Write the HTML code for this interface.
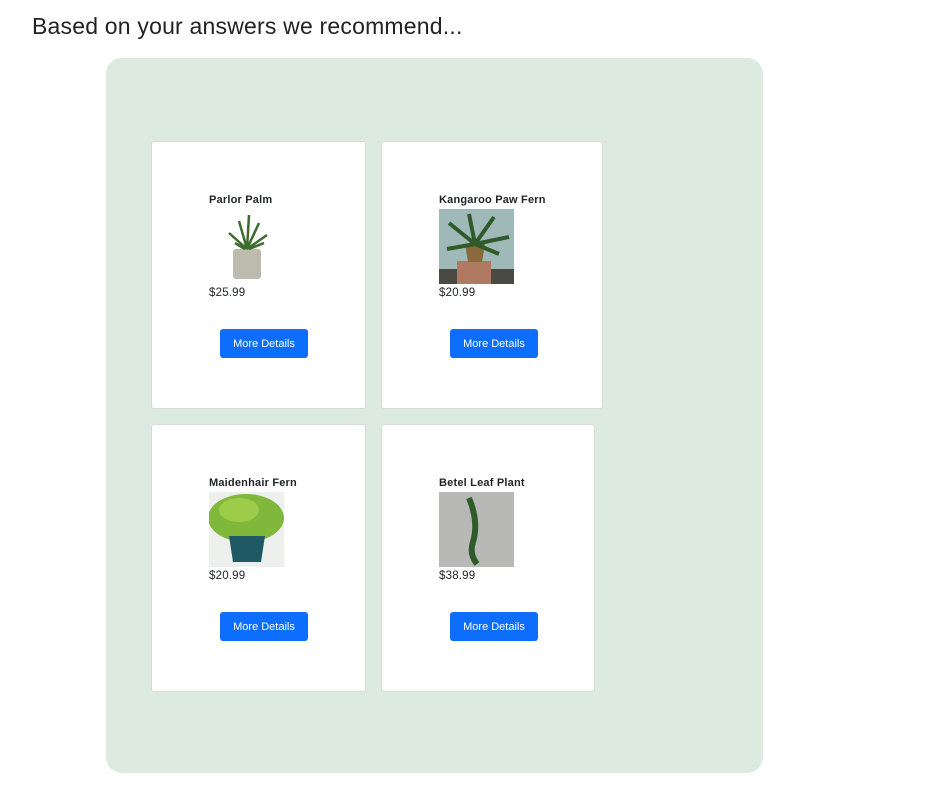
<!DOCTYPE html>
<html><head><meta charset="utf-8"><style>
body{margin:0;background:#fff;font-family:"Liberation Sans",sans-serif;color:#212529;width:940px;height:792px;overflow:hidden;position:relative}
h1{position:absolute;left:32px;top:13px;margin:0;font-size:23px;font-weight:400;color:#222;letter-spacing:0.2px}
.box{position:absolute;left:106px;top:58px;width:657px;height:715px;background:#dceae0;border-radius:16px}
.card{position:absolute;background:#fff;border:1px solid #d8dcd8;border-radius:3px;box-sizing:border-box;height:268px}
.t{position:absolute;left:57px;top:52px;font-size:11px;font-weight:bold;letter-spacing:0.2px}
.img{position:absolute;left:57px;top:67px;width:75px;height:75px}
.p{position:absolute;left:57px;top:145px;font-size:11.5px;letter-spacing:0.2px}
.b{position:absolute;left:68px;top:187px;width:88px;height:29px;background:#0d6efd;color:#fff;border-radius:3px;font-size:11px;line-height:30px;text-align:center}
</style></head><body>
<h1>Based on your answers we recommend...</h1>
<div class="box"></div>
<div class="card" style="left:151px;top:141px;width:215px">
<div class="t">Parlor Palm</div>
<svg class="img" viewBox="0 0 75 75"><rect x="24" y="40" width="28" height="30" rx="3" fill="#bdbbae"/><g stroke="#3d6b2e" stroke-width="2.5" fill="none"><path d="M38 40 L30 12 M38 40 L40 6 M38 40 L50 14 M38 40 L20 24 M38 40 L58 26 M36 40 L26 34 M40 40 L55 34"/></g></svg>
<div class="p">$25.99</div><div class="b">More Details</div></div>
<div class="card" style="left:381px;top:141px;width:222px">
<div class="t">Kangaroo Paw Fern</div>
<svg class="img" viewBox="0 0 75 75"><rect width="75" height="75" fill="#9fb8b8"/><rect y="60" width="75" height="15" fill="#4a4a44"/><rect x="18" y="52" width="34" height="23" fill="#b07a62"/><path d="M26 35 h20 l-3 18 h-14z" fill="#8a6a3a"/><g stroke="#2f5a2a" stroke-width="4" fill="none"><path d="M36 35 L10 14 M36 35 L30 5 M36 35 L55 8 M36 35 L70 28 M36 35 L8 40 M36 35 L60 45"/></g></svg>
<div class="p">$20.99</div><div class="b">More Details</div></div>
<div class="card" style="left:151px;top:424px;width:215px">
<div class="t">Maidenhair Fern</div>
<svg class="img" viewBox="0 0 75 75"><rect width="75" height="75" fill="#eef0ee"/><ellipse cx="37" cy="26" rx="38" ry="24" fill="#7fb83a"/><ellipse cx="30" cy="18" rx="20" ry="12" fill="#9ccc4a"/><path d="M20 44 h36 l-4 26 h-28z" fill="#1f5a64"/></svg>
<div class="p">$20.99</div><div class="b">More Details</div></div>
<div class="card" style="left:381px;top:424px;width:214px">
<div class="t">Betel Leaf Plant</div>
<svg class="img" viewBox="0 0 75 75"><rect width="75" height="75" fill="#b8b8b6"/><path d="M30 6 Q40 30 34 50 Q30 62 38 72" stroke="#2f5a2a" stroke-width="6" fill="none"/></svg>
<div class="p">$38.99</div><div class="b">More Details</div></div>
</body></html>
